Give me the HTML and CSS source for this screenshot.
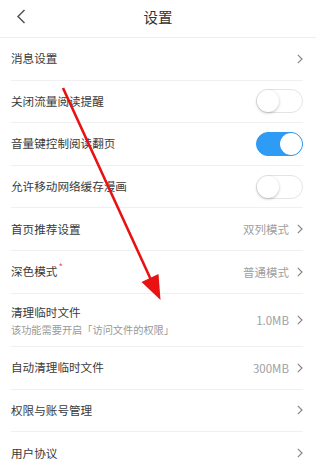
FILE: index.html
```html
<!DOCTYPE html>
<html lang="zh-CN">
<head>
    <meta charset="UTF-8">
    <meta name="viewport" content="width=device-width, initial-scale=1.0">
    <title>设置</title>
    <link rel="stylesheet" href="styles.css">
</head>
<body>
    <div class="page">
        <div class="header">
            <div class="back">
                <svg width="10" height="15" viewBox="0 0 10 15"><path d="M8.5 1 L2 7.5 L8.5 14" fill="none" stroke="#555" stroke-width="1.5"/></svg>
            </div>
            <div class="title">设置</div>
            <div></div>
        </div>

        <div class="list">
            <div class="row">
                <span class="label">消息设置</span>
                <span class="more"><svg class="chev" width="6" height="10" viewBox="0 0 6 10"><path d="M0.8 0.8 L5 5 L0.8 9.2" fill="none" stroke="#888" stroke-width="1.2"/></svg></span>
            </div>
            <div class="row">
                <span class="label">关闭流量阅读提醒</span>
                <span class="toggle"><span class="knob"></span></span>
            </div>
            <div class="row">
                <span class="label">音量键控制阅读翻页</span>
                <span class="toggle on"><span class="knob"></span></span>
            </div>
            <div class="row">
                <span class="label">允许移动网络缓存漫画</span>
                <span class="toggle"><span class="knob"></span></span>
            </div>
            <div class="row">
                <span class="label">首页推荐设置</span>
                <span class="more"><span class="value">双列模式</span><svg class="chev" width="6" height="10" viewBox="0 0 6 10"><path d="M0.8 0.8 L5 5 L0.8 9.2" fill="none" stroke="#888" stroke-width="1.2"/></svg></span>
            </div>
            <div class="row">
                <span class="label">深色模式<sup class="dot">*</sup></span>
                <span class="more"><span class="value">普通模式</span><svg class="chev" width="6" height="10" viewBox="0 0 6 10"><path d="M0.8 0.8 L5 5 L0.8 9.2" fill="none" stroke="#888" stroke-width="1.2"/></svg></span>
            </div>
            <div class="row tall">
                <div class="stack">
                    <span class="label">清理临时文件</span>
                    <span class="sub">该功能需要开启「访问文件的权限」</span>
                </div>
                <span class="more"><span class="value">1.0MB</span><svg class="chev" width="6" height="10" viewBox="0 0 6 10"><path d="M0.8 0.8 L5 5 L0.8 9.2" fill="none" stroke="#888" stroke-width="1.2"/></svg></span>
            </div>
            <div class="row">
                <span class="label">自动清理临时文件</span>
                <span class="more"><span class="value">300MB</span><svg class="chev" width="6" height="10" viewBox="0 0 6 10"><path d="M0.8 0.8 L5 5 L0.8 9.2" fill="none" stroke="#888" stroke-width="1.2"/></svg></span>
            </div>
            <div class="row">
                <span class="label">权限与账号管理</span>
                <span class="more"><svg class="chev" width="6" height="10" viewBox="0 0 6 10"><path d="M0.8 0.8 L5 5 L0.8 9.2" fill="none" stroke="#888" stroke-width="1.2"/></svg></span>
            </div>
            <div class="row">
                <span class="label">用户协议</span>
                <span class="more"><svg class="chev" width="6" height="10" viewBox="0 0 6 10"><path d="M0.8 0.8 L5 5 L0.8 9.2" fill="none" stroke="#888" stroke-width="1.2"/></svg></span>
            </div>
        </div>

        <!-- annotation arrow drawn over the list -->
        <svg class="arrow" width="329" height="465" viewBox="0 0 329 465">
            <line x1="63" y1="88" x2="152" y2="282" stroke="#e81212" stroke-width="2.6"/>
            <polygon points="160.5,300 141.5,282 158.5,274" fill="#e81212"/>
        </svg>
    </div>
</body>
</html>
```

FILE: styles.css
```css
body {
    margin: 0;
    background: #fff;
    font-family: "Noto Sans CJK SC", "Noto Sans", sans-serif;
    color: #333;
}
.page {
    position: relative;
    width: 316px;
    height: 465px;
    overflow: hidden;
}
.header {
    display: grid;
    grid-template-columns: 1fr auto 1fr;
    align-items: center;
    height: 37px;
    border-bottom: 1px solid #eee;
}
.back {
    display: flex;
    padding-left: 16px;
    padding-bottom: 4px;
}
.title {
    font-size: 14.5px;
    color: #333;
    padding-bottom: 4px;
}
.list {
    padding: 0 13px 0 11px;
}
.row {
    display: flex;
    align-items: center;
    justify-content: space-between;
    height: 41.6px;
    border-bottom: 1px solid #f0f0f0;
}
.row.tall {
    height: 52.5px;
}
.label {
    font-size: 11.6px;
    line-height: 17px;
    color: #3a3a3a;
}
.stack {
    display: flex;
    flex-direction: column;
    padding-top: 1px;
}
.sub {
    font-size: 10.2px;
    line-height: 15px;
    margin-top: 1px;
    color: #999;
}
.dot {
    color: #f0507a;
    font-size: 9.5px;
    line-height: 0;
    margin-left: 1px;
}
.more {
    display: flex;
    align-items: center;
    gap: 8px;
}
.value {
    font-size: 11.5px;
    color: #a0a0a0;
}
.chev {
    display: block;
}
.toggle {
    position: relative;
    box-sizing: border-box;
    width: 47px;
    height: 24px;
    border-radius: 12px;
    border: 1px solid #e4e4e4;
    background: #fff;
}
.toggle .knob {
    position: absolute;
    top: 0;
    left: 0;
    width: 22px;
    height: 22px;
    border-radius: 50%;
    background: #fff;
    box-shadow: 0 1px 3px rgba(0, 0, 0, 0.25);
}
.toggle.on {
    background: #2e9bf4;
    border-color: #2e9bf4;
}
.toggle.on .knob {
    left: auto;
    right: 0;
    box-shadow: 0 0 1px rgba(0, 0, 0, 0.2);
}
.arrow {
    position: absolute;
    top: 0;
    left: 0;
    pointer-events: none;
}
```
